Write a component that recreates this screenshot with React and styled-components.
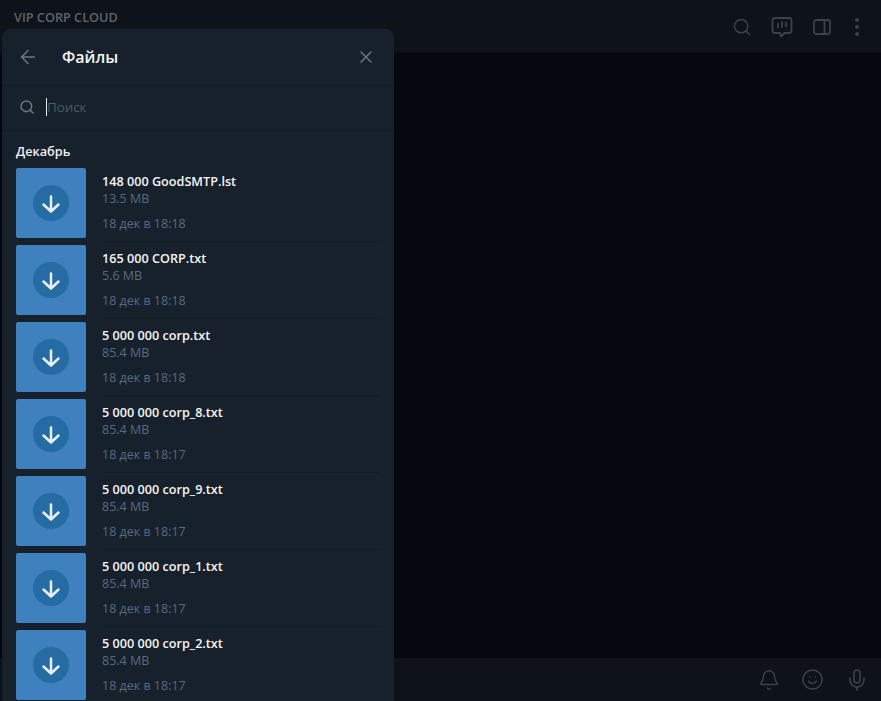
import styled, { createGlobalStyle } from 'styled-components'
import { ArrowLeft, X, Search, Bell, Smile, Mic } from 'lucide-react'

const files = [
  { name: '148 000 GoodSMTP.lst', size: '13.5 MB', date: '18 дек в 18:18' },
  { name: '165 000 CORP.txt', size: '5.6 MB', date: '18 дек в 18:18' },
  { name: '5 000 000 corp.txt', size: '85.4 MB', date: '18 дек в 18:18' },
  { name: '5 000 000 corp_8.txt', size: '85.4 MB', date: '18 дек в 18:17' },
  { name: '5 000 000 corp_9.txt', size: '85.4 MB', date: '18 дек в 18:17' },
  { name: '5 000 000 corp_1.txt', size: '85.4 MB', date: '18 дек в 18:17' },
  { name: '5 000 000 corp_2.txt', size: '85.4 MB', date: '18 дек в 18:17' },
]

function App() {
  return (
    <Page>
      <GlobalStyle />
      <TopBar>
        <Channel>VIP CORP CLOUD</Channel>
        <TopIcons>
          <Search size={20} strokeWidth={1.8} />
          <svg width="22" height="22" viewBox="0 0 22 22" fill="none" stroke="currentColor" strokeWidth="1.8" strokeLinecap="round" strokeLinejoin="round">
            <path d="M4 2h14a2.5 2.5 0 0 1 2.5 2.5v10a2.5 2.5 0 0 1-2.5 2.5h-4.5L10 20.5 9 17H4a2.5 2.5 0 0 1-2.5-2.5v-10A2.5 2.5 0 0 1 4 2z" />
            <path d="M7 7.5v4M11 6v5M15 6.5v4" />
          </svg>
          <svg width="18" height="16" viewBox="0 0 18 16" fill="none" stroke="currentColor" strokeWidth="1.8">
            <rect x="1" y="1" width="16" height="14" rx="2.5" />
            <path d="M11.5 1v14" />
          </svg>
          <Dots>
            <i />
            <i />
            <i />
          </Dots>
        </TopIcons>
      </TopBar>
      <Chat />
      <BottomBar>
        <Bell size={22} strokeWidth={1.6} />
        <Smile size={23} strokeWidth={1.6} />
        <Mic size={24} strokeWidth={1.6} />
      </BottomBar>
      <Panel>
        <PanelHeader>
          <BackIcon size={22} strokeWidth={1.6} />
          <Title>Файлы</Title>
          <CloseIcon size={20} strokeWidth={1.6} />
        </PanelHeader>
        <SearchRow>
          <SearchIcon size={16} strokeWidth={2.2} />
          <Caret />
          <Placeholder>Поиск</Placeholder>
        </SearchRow>
        <Month>Декабрь</Month>
        <List>
          {files.map((file, i) => (
            <FileRow key={file.name}>
              <Thumb>
                <Circle>
                  <svg width="36" height="36" viewBox="0 0 36 36" fill="none" stroke="currentColor" strokeWidth="2.5" strokeLinecap="round" strokeLinejoin="round">
                    <path d="M18 11.5V26M10.5 19.5l7.5 7 7.5-7" />
                  </svg>
                </Circle>
              </Thumb>
              <Info $last={i === files.length - 1}>
                <FileName>{file.name}</FileName>
                <Meta>{file.size}</Meta>
                <DateText>{file.date}</DateText>
              </Info>
            </FileRow>
          ))}
        </List>
      </Panel>
    </Page>
  )
}

const GlobalStyle = createGlobalStyle`
  html, body {
    margin: 0;
    background: #05080f;
    font-family: "Open Sans", "Liberation Sans", sans-serif;
  }
`

const Page = styled.div`
  position: relative;
  width: 881px;
  height: 701px;
  overflow: hidden;
  display: flex;
  flex-direction: column;
`

const TopBar = styled.header`
  height: 53px;
  flex-shrink: 0;
  box-sizing: border-box;
  padding: 0 22px 0 14px;
  display: flex;
  align-items: flex-start;
  justify-content: space-between;
  background: #0e1319;
  border-bottom: 1px solid #0b0f15;
`

const Channel = styled.div`
  margin-top: 8px;
  font-size: 12.7px;
  line-height: 18px;
  font-weight: 600;
  color: #5d646b;
`

const TopIcons = styled.div`
  display: flex;
  align-items: center;
  gap: 20px;
  height: 54px;
  color: #3c4248;

  svg:nth-child(2) {
    margin-left: -1px;
  }
`

const Dots = styled.div`
  display: flex;
  flex-direction: column;
  gap: 3px;
  margin-left: 4px;

  i {
    width: 4px;
    height: 4px;
    border-radius: 50%;
    background: #3c4248;
  }
`

const Chat = styled.main`
  flex: 1;
  background: #05080f;
`

const BottomBar = styled.footer`
  height: 43px;
  flex-shrink: 0;
  box-sizing: border-box;
  padding-right: 12px;
  display: flex;
  align-items: center;
  justify-content: flex-end;
  gap: 21px;
  background: #0e1319;
  color: #3c4248;
`

const Panel = styled.section`
  position: absolute;
  left: 2px;
  top: 29px;
  width: 392px;
  height: 690px;
  border-radius: 8px 8px 0 0;
  background: #17212b;
  color: #fff;
`

const PanelHeader = styled.div`
  height: 57px;
  box-sizing: border-box;
  display: flex;
  align-items: center;
  padding: 0 18px 0 15px;
  border-bottom: 1px solid #121a22;
`

const BackIcon = styled(ArrowLeft)`
  color: #6d7883;
`

const CloseIcon = styled(X)`
  margin-left: auto;
  color: #6d7883;
`

const Title = styled.h1`
  margin: 0 0 0 23px;
  font-size: 16px;
  font-weight: 600;
  color: #f5f5f5;
`

const SearchRow = styled.div`
  height: 45px;
  box-sizing: border-box;
  display: flex;
  align-items: center;
  padding: 0 0 2px 17px;
  border-bottom: 1px solid #121a22;
`

const SearchIcon = styled(Search)`
  color: #6d7883;
`

const Caret = styled.span`
  width: 1px;
  height: 18px;
  margin-left: 11px;
  background: #e8e8e8;
`

const Placeholder = styled.span`
  font-size: 13.3px;
  color: #505a64;
`

const Month = styled.div`
  padding: 11px 0 0 14px;
  font-size: 12.7px;
  line-height: 18px;
  font-weight: 600;
  color: #f0f0f0;
`

const List = styled.div`
  display: flex;
  flex-direction: column;
  gap: 7px;
  margin-top: 8px;
`

const FileRow = styled.article`
  display: flex;
  gap: 16px;
  padding: 0 14px;
  height: 70px;
`

const Thumb = styled.div`
  width: 70px;
  height: 70px;
  flex-shrink: 0;
  border-radius: 2px;
  display: flex;
  align-items: center;
  justify-content: center;
  background: #3f80bf;
`

const Circle = styled.div`
  width: 36px;
  height: 36px;
  border-radius: 50%;
  display: flex;
  align-items: center;
  justify-content: center;
  background: #256ba4;
  color: #e9eff5;
`

const Info = styled.div`
  flex: 1;
  height: 74px;
  box-sizing: border-box;
  padding-top: 4px;
  border-bottom: ${p => (p.$last ? 'none' : '1px solid #121a22')};
`

const FileName = styled.div`
  font-size: 12.65px;
  line-height: 18px;
  font-weight: 600;
  color: #f5f5f5;
`

const Meta = styled.div`
  font-size: 12.5px;
  line-height: 17px;
  color: #566a80;
`

const DateText = styled(Meta)`
  margin-top: 8px;
`

export default App
